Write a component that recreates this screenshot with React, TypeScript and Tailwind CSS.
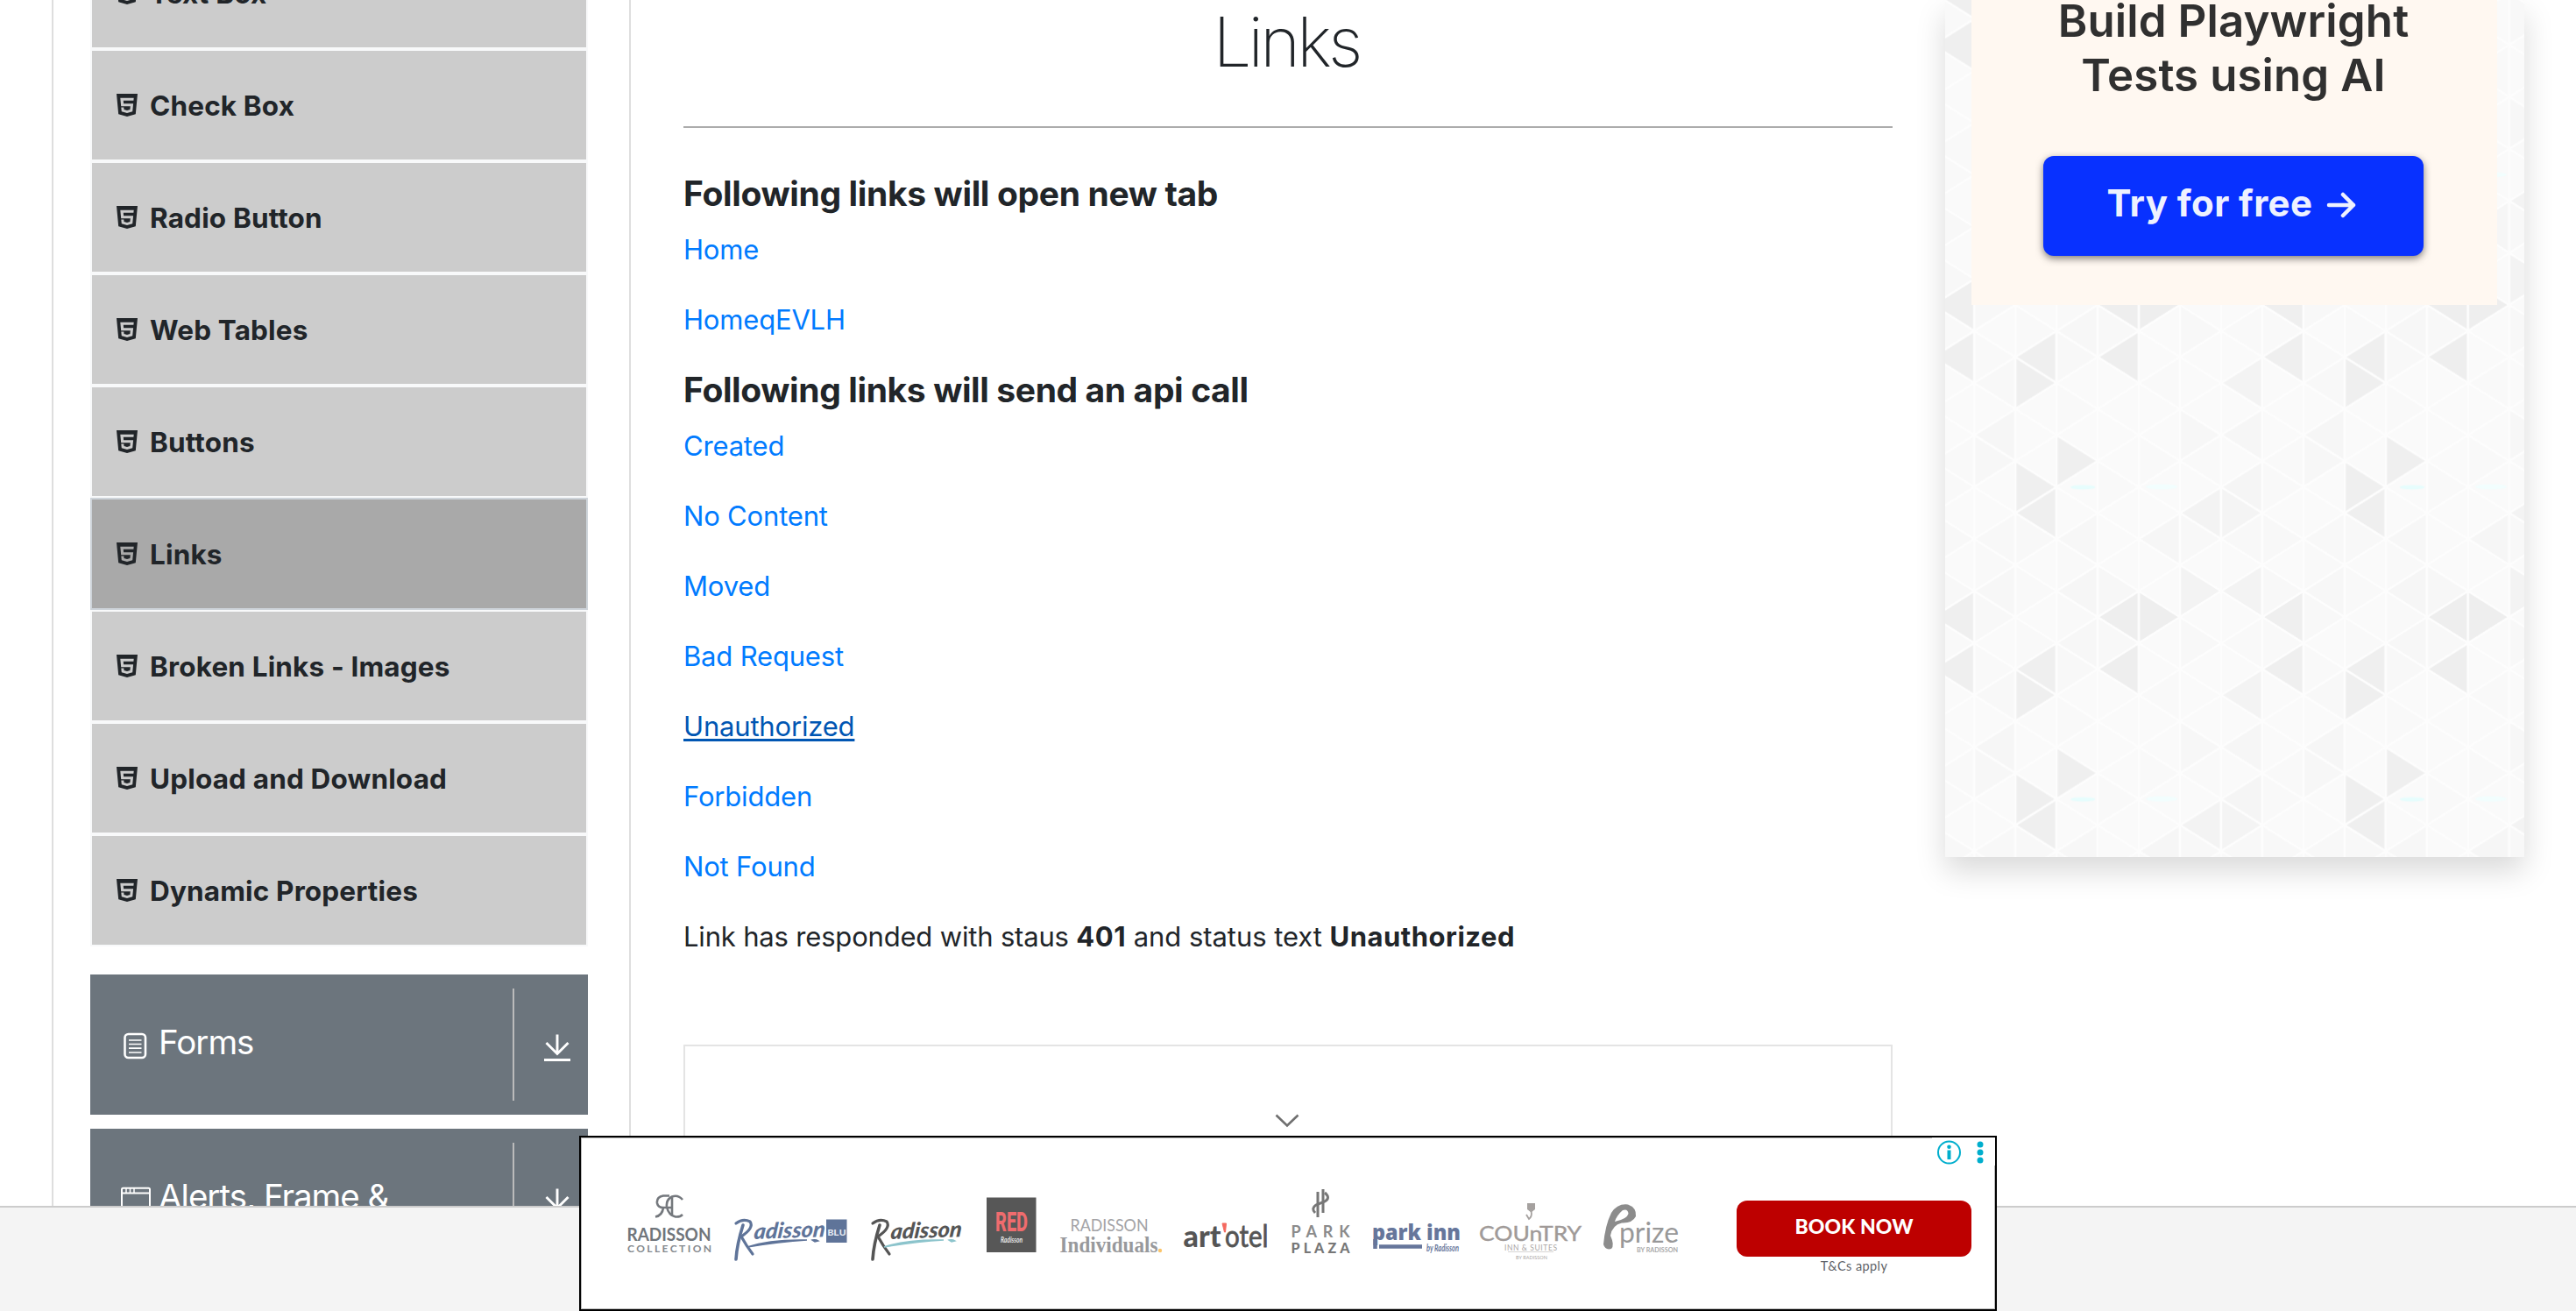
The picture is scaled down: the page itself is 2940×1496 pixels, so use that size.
import type { ReactNode } from "react";

const menuItems = [
  "Text Box",
  "Check Box",
  "Radio Button",
  "Web Tables",
  "Buttons",
  "Links",
  "Broken Links - Images",
  "Upload and Download",
  "Dynamic Properties",
];

function Html5Icon() {
  return (
    <svg className="h-[26px] w-6 shrink-0" viewBox="0 0 24 26" fill="#212529">
      <path
        fillRule="evenodd"
        d="M0 0H24L21.8 23.2 12 26 2.2 23.2ZM4.3 4.8 5.2 14.2H15.8L15.4 18 12 19 8.5 18 8.3 15.6H5.3L5.8 20.2 12 22 18.2 20.2 19.1 11.2H8.1L7.8 7.8H19.4L19.7 4.8Z"
      />
    </svg>
  );
}

function FormsIcon() {
  return (
    <svg className="h-8 w-9" viewBox="0 0 36 32" fill="none" stroke="#fff">
      <rect x="4.500" y="3" width="23.5" height="27" rx="4" strokeWidth="2.6" />
      <path d="M9 10H23.500M9 14.500H23.500M9 19.200H23.500M9 24H23.500" strokeWidth="1.700" />
    </svg>
  );
}

function WindowIcon() {
  return (
    <svg className="h-8 w-9" viewBox="0 0 36 32" fill="none" stroke="#fff">
      <rect x="1" y="2.700" width="32" height="26" rx="1.500" strokeWidth="2" />
      <path d="M1 8.500H33" strokeWidth="2" />
      <path d="M6 3V8M10.500 3V8M15 3V8" strokeWidth="1.500" />
    </svg>
  );
}

function DownloadIcon() {
  return (
    <svg className="h-8 w-8" viewBox="0 0 32 32" fill="none" stroke="#fff" strokeWidth="2.900">
      <path d="M16 .5V22M3.500 10 16 22.500 28.500 10M1 29.500H31" />
    </svg>
  );
}

function Group({ icon, label }: { icon: ReactNode; label: string }) {
  return (
    <div className="flex h-40 shrink-0 bg-[#6c757d] py-4 text-white">
      <div className="flex w-[484px] items-start border-r-2 border-[#bbb] pl-[35px] pt-[37px]">
        <div className="pt-3">{icon}</div>
        <span className="ml-[7px] text-[38.5px] leading-[48px] tracking-[-1px]">{label}</span>
      </div>
      <div className="pl-[33px] pt-[52px]">
        <DownloadIcon />
      </div>
    </div>
  );
}

function PageLink({ children, hovered = false }: { children: string; hovered?: boolean }) {
  return (
    <p className="mb-8 h-12 text-[31px] leading-[48px] tracking-[-0.18px]">
      <a
        className={
          hovered
            ? "text-[#0056b3] underline decoration-[3px] underline-offset-[3px]"
            : "text-[#007bff]"
        }
      >
        {children}
      </a>
    </p>
  );
}

/* Each entry: strip column, half-row of the apex, fill. */
const shaded: [number, number, string][] = [
  [2, 1, "#efefef"], [1, 2, "#efefef"], [1, 3, "#efefef"], [6, 2, "#f5f5f5"],
  [5, 3, "#f3f3f3"], [6, 3, "#f4f4f4"], [5, 6, "#f3f3f3"], [6, 6, "#f3f3f3"],
  [3, 7, "#eeeeee"], [4, 7, "#eeeeee"], [7, 7, "#efefef"], [7, 9, "#efefef"],
  [1, 9, "#efefef"], [3, 9, "#eeeeee"], [1, 10, "#efefef"], [6, 10, "#f3f3f3"],
  [0, 0, "#f6f6f6"], [6, 0, "#f6f6f6"], [5, 0, "#f7f7f7"], [0, 6, "#f7f7f7"],
  [4, 4, "#f6f6f6"], [2, 6, "#f6f6f6"], [3, 6, "#f7f7f7"], [0, 1, "#f7f7f7"],
  [7, 6, "#f8f8f8"], [0, 4, "#f8f8f8"], [1, 4, "#f8f8f8"], [2, 4, "#f7f7f7"],
  [5, 4, "#f8f8f8"], [6, 4, "#f8f8f8"], [2, 8, "#f7f7f7"], [3, 8, "#f8f8f8"],
  [0, 10, "#f8f8f8"], [2, 9, "#f8f8f8"], [0, 7, "#f8f8f8"], [5, 8, "#f8f8f8"],
  [7, 4, "#f8f8f8"], [7, 1, "#f9f9f9"], [0, 5, "#f9f9f9"], [2, 5, "#f9f9f9"],
  [5, 1, "#f9f9f9"], [1, 6, "#f9f9f9"], [4, 10, "#f9f9f9"], [2, 11, "#f9f9f9"],
  [4, 1, "#f9f9f9"], [6, 8, "#f9f9f9"], [1, 8, "#f9f9f9"], [0, 9, "#f9f9f9"],
  [2, 7, "#f9f9f9"], [3, 2, "#f9f9f9"], [7, 2, "#f9f9f9"], [7, 8, "#f9f9f9"],
];

const STRIP = 46.97;
const HALF = 29.68;

function trianglePoints(col: number, row: number) {
  const pointsRight = (col + row) % 2 === 1;
  const base = pointsRight ? col * STRIP : (col + 1) * STRIP;
  const apex = pointsRight ? (col + 1) * STRIP : col * STRIP;
  const y = row * HALF;
  return `${base},${y - HALF} ${base},${y + HALF} ${apex},${y}`;
}

function TrianglePattern() {
  const cells: ReactNode[] = [];
  for (let col = 0; col < 8; col++) {
    for (let row = 0; row <= 12; row++) {
      const hit = shaded.find(([c, r]) => c === col && r === row % 12);
      cells.push(
        <polygon
          key={`${col}-${row}`}
          points={trianglePoints(col, row)}
          fill={hit ? hit[2] : "#fafafa"}
          stroke="#fdfdfd"
          strokeWidth="2.600"
        />,
      );
    }
  }
  return (
    <svg className="absolute inset-0 h-full w-full">
      <defs>
        <pattern
          id="triangles"
          x="33.2"
          y="140.3"
          width={STRIP * 8}
          height={HALF * 12}
          patternUnits="userSpaceOnUse"
        >
          {cells}
          <ellipse cx="124" cy="59.500" rx="14" ry="2.500" fill="#e6fdfd" />
          <ellipse cx="214" cy="59" rx="18" ry="3" fill="#f2fefe" />
        </pattern>
      </defs>
      <rect width="100%" height="100%" fill="url(#triangles)" />
    </svg>
  );
}

function Logo({ x, w, children }: { x: number; w: number; children: ReactNode }) {
  return (
    <svg className="shrink-0" width={w} height={100} viewBox={`${x} 1350 ${w} 100`}>
      {children}
    </svg>
  );
}

function RadissonScript({ x, color, line }: { x: number; color: string; line: string }) {
  return (
    <g transform={`translate(${x} 0)`}>
      <path d="M11 1398Q4 1420 3 1437" stroke={color} strokeWidth="3.600" fill="none" strokeLinecap="round" />
      <path
        d="M3 1396Q11 1390 19 1394Q24 1401 9 1411Q15 1422 22 1431"
        stroke={color}
        strokeWidth="3.200"
        fill="none"
        strokeLinecap="round"
      />
      <g transform="translate(23 1414) rotate(-2) skewX(-8)">
        <text
          fontFamily="Lato"
          fontStyle="italic"
          fontWeight="900"
          fontSize="25"
          fill={color}
          textLength="81"
          lengthAdjust="spacingAndGlyphs"
        >
          adisson
        </text>
      </g>
      <path d="M16 1423Q42 1414 84 1415Q52 1417 16 1423ZM90 1415Q94 1414 97 1416L93 1417Z" fill={line} stroke={line} strokeWidth="1.500" />
    </g>
  );
}

function HotelLogos() {
  return (
    <>
      <Logo x={700} w={125}>
        <g fill="none" stroke="#74787d" strokeWidth="2.600">
          <path d="M764 1364.500H757Q749 1366 750 1373Q751 1378 757 1378H766M757 1378Q756 1387 748 1388.500" />
          <path d="M779 1369Q774 1363 767 1365.500Q760 1369 761 1377Q763 1387 771 1388.500Q776 1389 779 1386M767 1366V1388" />
        </g>
        <text x="715.500" y="1415.500" fontFamily="Lato" fontWeight="700" fontSize="21" fill="#70757b" textLength="96" lengthAdjust="spacingAndGlyphs">RADISSON</text>
        <text x="716" y="1429" fontFamily="Lato" fontWeight="700" fontSize="12" fill="#85898e" textLength="96">COLLECTION</text>
      </Logo>
      <Logo x={825} w={150}>
        <RadissonScript x={837} color="#5f7499" line="#5f7499" />
        <rect x="943" y="1391.500" width="23.500" height="26.500" fill="#5f7499" />
        <text x="944.500" y="1409.500" fontFamily="Inter" fontWeight="700" fontSize="9.500" fill="#e6eaf2" textLength="21" lengthAdjust="spacingAndGlyphs">BLU</text>
      </Logo>
      <Logo x={975} w={135}>
        <RadissonScript x={993} color="#555" line="#8cc4cc" />
      </Logo>
      <Logo x={1110} w={90}>
        <rect x="1126" y="1366.500" width="56.500" height="62.500" fill="#575757" />
        <text x="1136" y="1405" fontFamily="Roboto" fontWeight="800" fontSize="31" fill="#ef6c6e" textLength="37" lengthAdjust="spacingAndGlyphs">RED</text>
        <text x="1142" y="1417.500" fontFamily="Lato" fontStyle="italic" fontWeight="700" fontSize="9" fill="#e8e8e8" textLength="25" lengthAdjust="spacingAndGlyphs">Radisson</text>
      </Logo>
      <Logo x={1200} w={135}>
        <text x="1221.500" y="1405" fontFamily="Lato" fontSize="19" fill="#a3a3a6" textLength="89" lengthAdjust="spacingAndGlyphs">RADISSON</text>
        <text x="1209.500" y="1429" fontFamily="Liberation Serif" fontWeight="700" fontSize="25" fill="#98999c" textLength="112" lengthAdjust="spacingAndGlyphs">Individuals</text>
        <circle cx="1324" cy="1427" r="2.200" fill="#fcc56b" />
      </Logo>
      <Logo x={1335} w={125}>
        <text x="1350.500" y="1422.500" fontFamily="Lato" fontWeight="900" fontSize="35" fill="#555" textLength="43" lengthAdjust="spacingAndGlyphs">art</text>
        <path d="M1395 1396H1399.500L1398.500 1406H1397.500Z" fill="#f4695f" stroke="#f4695f" />
        <text x="1398" y="1422.500" fontFamily="Lato" fontSize="35" fill="#555" stroke="#555" strokeWidth=".8" textLength="49.500" lengthAdjust="spacingAndGlyphs">otel</text>
      </Logo>
      <Logo x={1460} w={95}>
        <g fill="none" stroke="#777" strokeWidth="3">
          <path d="M1504 1360V1389M1510 1357V1384" />
          <path d="M1512 1361Q1519 1367 1512 1371L1502 1375Q1496 1379 1501 1384" />
        </g>
        <text x="1473.500" y="1411.500" fontFamily="Lato" fontWeight="700" fontSize="18" fill="#8b8b8b" textLength="67">PARK</text>
        <text x="1473.500" y="1429.500" fontFamily="Lato" fontWeight="900" fontSize="16" fill="#777" textLength="67">PLAZA</text>
      </Logo>
      <Logo x={1555} w={125}>
        <text x="1566" y="1415" fontFamily="Open Sans" fontWeight="800" fontSize="25.500" fill="#66769b" textLength="101" lengthAdjust="spacingAndGlyphs">park inn</text>
        <path d="M1569.500 1414V1425M1574 1422.500H1623" stroke="#66769b" strokeWidth="4.500" />
        <text x="1628" y="1427.500" fontFamily="Lato" fontStyle="italic" fontWeight="700" fontSize="10.500" fill="#66769b" textLength="37" lengthAdjust="spacingAndGlyphs">by Radisson</text>
      </Logo>
      <Logo x={1680} w={135}>
        <path d="M1743 1373H1752V1380L1747.500 1383.500 1743 1380Z" fill="#a5a19f" />
        <path d="M1747.500 1382Q1749 1388 1745 1391L1742 1386" stroke="#a5a19f" strokeWidth="1.800" fill="none" />
        <text x="1688" y="1415.500" fontFamily="Lato" fontSize="24" fill="#a09a98" stroke="#a09a98" strokeWidth=".4" textLength="117" lengthAdjust="spacingAndGlyphs">COUnTRY</text>
        <text x="1717" y="1427" fontFamily="Lato" fontSize="8.500" fill="#aaa6a4" textLength="60">INN &amp; SUITES</text>
        <path d="M1721 1428.500H1773" stroke="#d8d5d4" />
        <text x="1730" y="1436.500" fontFamily="Lato" fontSize="5.500" fill="#aaa6a4" textLength="36">BY RADISSON</text>
      </Logo>
      <Logo x={1815} w={120}>
        <path
          fillRule="evenodd"
          fill="#8c8c8c"
          d="M1830 1420Q1832 1398 1839 1384Q1846 1373 1858 1374.500Q1868 1378 1867 1388Q1863 1396 1851 1395.500Q1840 1398 1838 1410Q1843 1421 1839 1425Q1832 1427 1830 1420ZM1843 1394Q1857 1391 1858.500 1385Q1858 1379 1852 1381Q1845 1387 1843 1394Z"
        />
        <text x="1848" y="1417.500" fontFamily="Lato" fontSize="33" fill="#989898" textLength="68" lengthAdjust="spacingAndGlyphs">prize</text>
        <text x="1868" y="1429" fontFamily="Lato" fontWeight="700" fontSize="8" fill="#a9a9a9" textLength="47" lengthAdjust="spacingAndGlyphs">BY RADISSON</text>
      </Logo>
    </>
  );
}

function BottomAd() {
  return (
    <div className="absolute left-[661px] top-[1296px] h-[200px] w-[1618px] border-2 border-black bg-white">
      <div className="flex h-full items-start border border-[#bbb] pl-9 pt-[51px]">
        <HotelLogos />
        <div className="ml-[47px] mt-5 flex w-[268px] flex-col items-center">
          <button className="flex h-16 w-full items-center justify-center rounded-xl bg-[#bd0000] pb-1.5 font-[Lato] text-[23px] font-black tracking-[0.1px] text-white">
            BOOK NOW
          </button>
          <span className="mt-0.5 font-[Lato] text-[14.5px] leading-[18px] tracking-[0.4px] text-[#5f6368]">
            T&amp;Cs apply
          </span>
        </div>
      </div>
      <div className="absolute right-0 top-0 flex h-8 w-[72px] items-start bg-white">
        <svg className="h-8 w-[72px]" viewBox="2205 1298 72 32">
          <circle cx="2224.500" cy="1315" r="12.500" fill="none" stroke="#00aecd" strokeWidth="2" />
          <circle cx="2224.500" cy="1308.700" r="2.300" fill="#00aecd" />
          <path d="M2224.500 1312.500V1323" stroke="#00aecd" strokeWidth="4" />
          <g fill="#00aecd">
            <circle cx="2260" cy="1306" r="3.500" />
            <circle cx="2260" cy="1315" r="3.500" />
            <circle cx="2260" cy="1324" r="3.500" />
          </g>
        </svg>
      </div>
    </div>
  );
}

export default function App() {
  return (
    <div className="relative flex h-[1496px] w-[2940px] flex-col overflow-hidden bg-white font-[Inter,sans-serif] text-[#212529]">
      <main className="flex h-[1376px] shrink-0 overflow-hidden">
        <aside className="ml-[59px] flex w-[661px] shrink-0 flex-col border-x-2 border-[#dedede] pl-[42px] pr-[47px]">
          <ul className="-mt-[72px] shrink-0">
            {menuItems.map((item) => (
              <li
                key={item}
                className={
                  item === "Links"
                    ? "flex h-32 items-center border-2 border-[#ced4da] bg-[#a9a9a9] pl-7"
                    : "flex h-32 items-center border-2 border-[#f8f9fa] bg-[#ccc] pl-7"
                }
              >
                <Html5Icon />
                <span className="ml-3.5 pt-0.5 text-[31.5px] font-bold leading-[48px] tracking-[0.15px]">
                  {item}
                </span>
              </li>
            ))}
          </ul>
          <div className="mt-8 flex flex-col gap-4">
            <Group icon={<FormsIcon />} label="Forms" />
            <Group icon={<WindowIcon />} label="Alerts, Frame &" />
          </div>
        </aside>

        <section className="ml-[60px] w-[1380px] shrink-0">
          <h1 className="h-24 pr-1 text-center text-[78px] font-extralight leading-[96px] tracking-[-3.8px]">
            Links
          </h1>
          <hr className="mt-12 border-t-2 border-[#acacac]" />
          <h5 className="mb-4 mt-[51px] text-[39px] font-bold leading-[48px] tracking-[-0.35px]">
            Following links will open new tab
          </h5>
          <PageLink>Home</PageLink>
          <PageLink>HomeqEVLH</PageLink>
          <h5 className="mb-4 text-[39px] font-bold leading-[48px] tracking-[-0.38px]">
            Following links will send an api call
          </h5>
          <PageLink>Created</PageLink>
          <PageLink>No Content</PageLink>
          <PageLink>Moved</PageLink>
          <PageLink>Bad Request</PageLink>
          <PageLink hovered>Unauthorized</PageLink>
          <PageLink>Forbidden</PageLink>
          <PageLink>Not Found</PageLink>
          <p className="text-[31px] leading-[48px] tracking-[-0.18px]">
            Link has responded with staus <b className="font-bold tracking-[0.5px]">401</b>
            <span className="tracking-[-0.05px]"> and status text </span>
            <b className="font-bold tracking-[0.5px]">Unauthorized</b>
          </p>
          <div className="mt-[99px] flex h-60 justify-center border-2 border-[#e4e4e4] pr-0.5 pt-[77px]">
            <svg className="h-4 w-7" viewBox="0 0 28 16" fill="none" stroke="#6f6f6f" strokeWidth="2.600">
              <path d="M1.500 1.500 14 13.500 26.500 1.500" />
            </svg>
          </div>
        </section>

        <aside className="relative ml-[60px] h-[978px] w-[661px] shrink-0 px-[30px] shadow-[0_16px_32px_rgba(0,0,0,0.15)]">
          <TrianglePattern />
          <div className="relative flex h-[348px] w-[600px] flex-col items-center overflow-hidden bg-[#fff8f1]">
            <p className="-mt-[7px] pr-0.5 text-center text-[51px] font-semibold leading-[62px] tracking-[0.1px] text-[#303030]">
              Build Playwright
              <br />
              Tests using AI
            </p>
            <button className="mr-0.5 mt-[61px] flex h-[114px] w-[434px] items-center justify-center gap-4 rounded-xl bg-[#0831ff] pb-[7px] pr-1 text-[42px] font-bold tracking-[0.4px] text-[#eef1ff] shadow-[0_3px_8px_rgba(0,0,0,0.5)]">
              Try for free
              <svg className="mt-1 h-8 w-[34px]" viewBox="0 0 34 32" fill="none" stroke="#eef1ff" strokeWidth="4.500" strokeLinecap="round" strokeLinejoin="round">
                <path d="M3 16H31M19 4 31 16 19 28" />
              </svg>
            </button>
          </div>
        </aside>
      </main>
      <footer className="flex-1 border-t-2 border-[#ccc] bg-[#f4f4f4]" />
      <BottomAd />
    </div>
  );
}
